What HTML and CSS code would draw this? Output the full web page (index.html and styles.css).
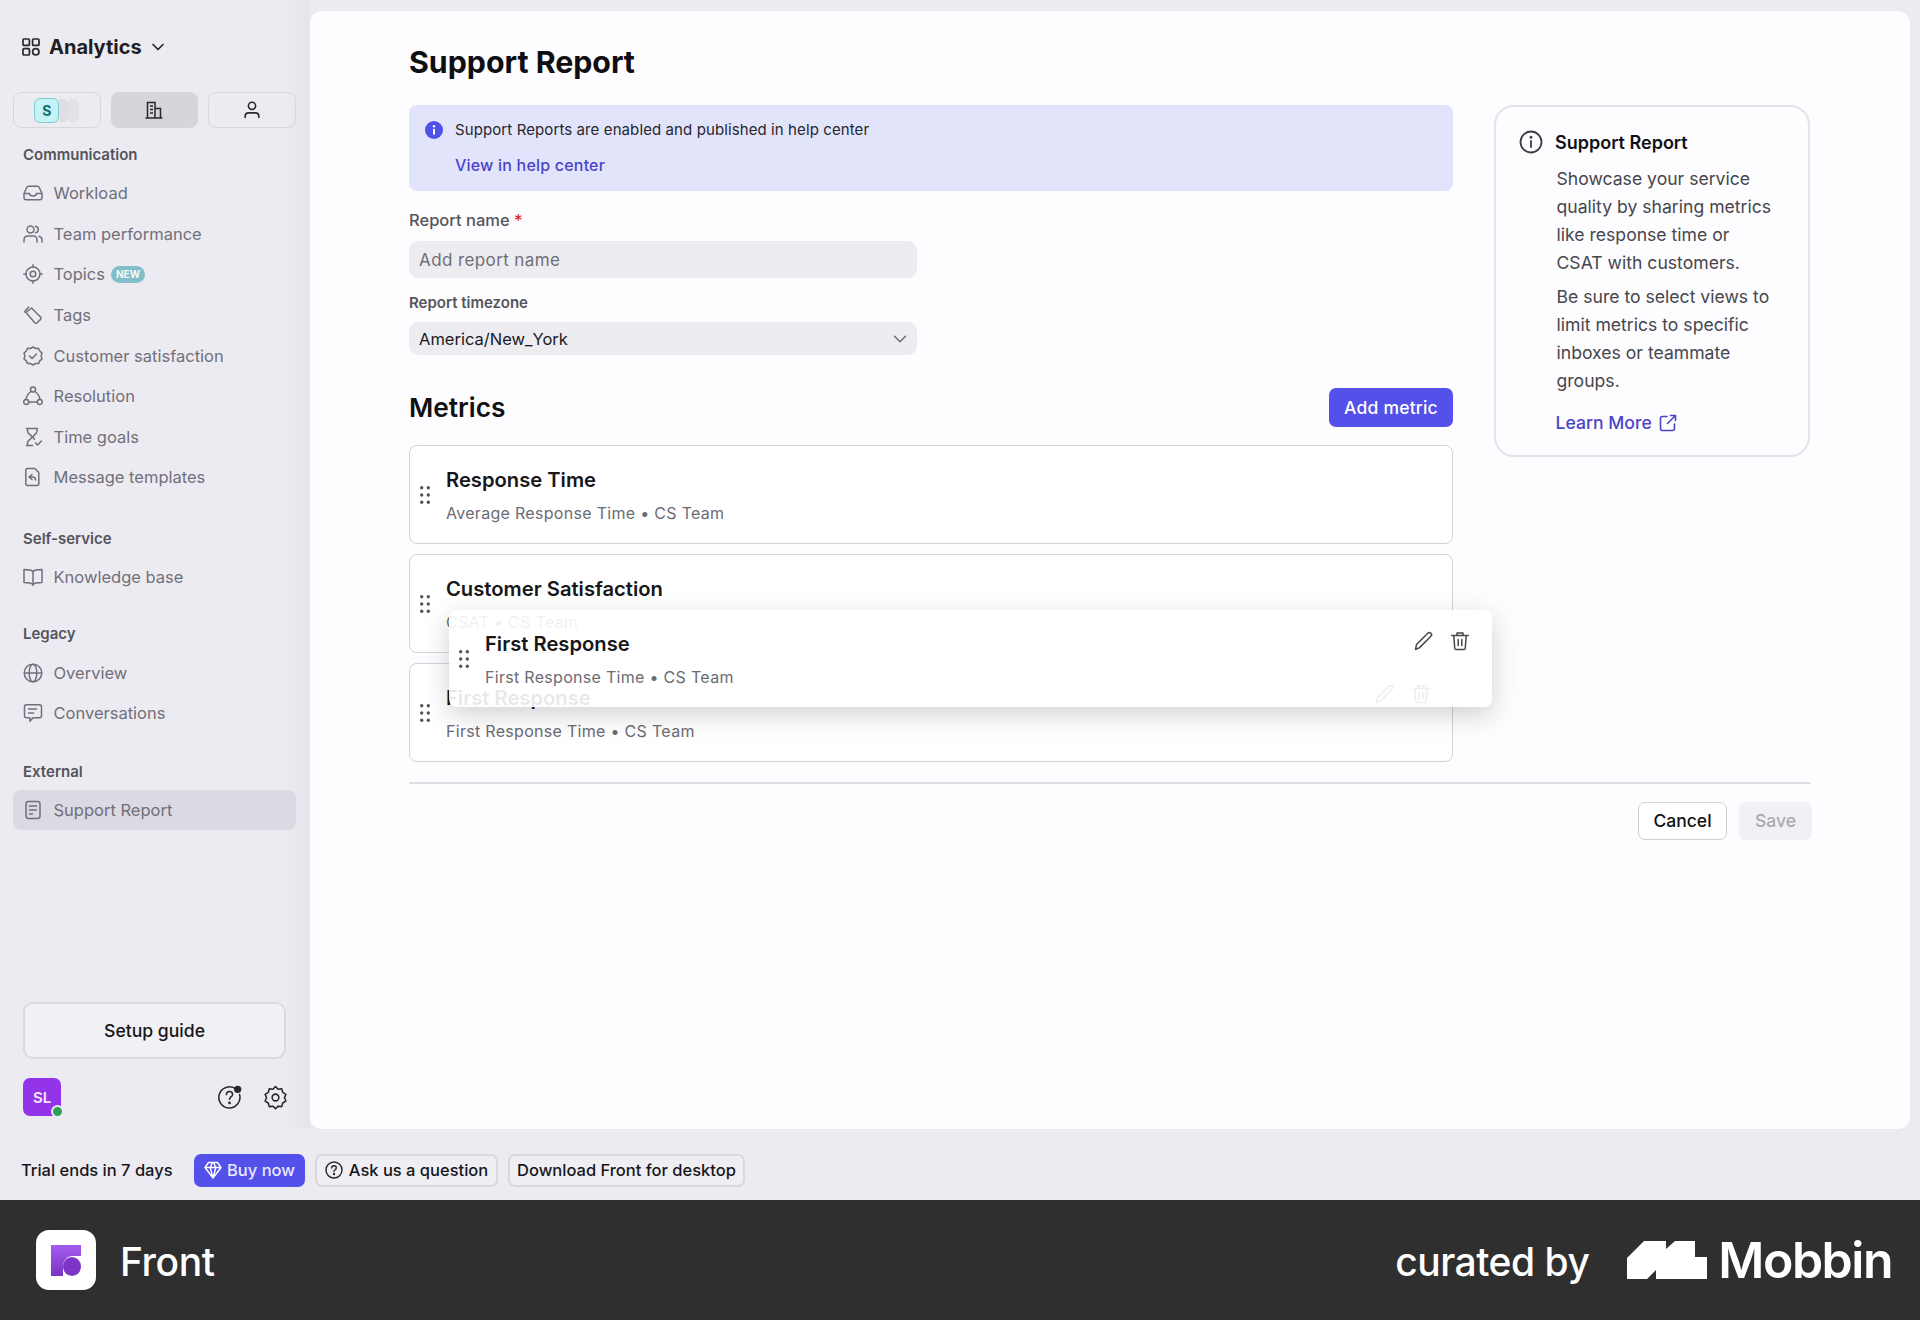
FILE: index.html
```html
<!DOCTYPE html>
<html lang="en">
<head>
<meta charset="utf-8">
<title>Support Report</title>
<link rel="stylesheet" href="styles.css">
</head>
<body>
<div class="page">
  <div class="workspace">
    <aside class="sidebar">
      <div class="app-title">
        <svg class="ico-18" viewBox="0 0 18 18" fill="none" stroke="#27272c" stroke-width="1.7"><rect x="1" y="1" width="6.4" height="6.4" rx="1"/><rect x="10.6" y="1" width="6.4" height="6.4" rx="1"/><rect x="1" y="10.6" width="6.4" height="6.4" rx="1"/><circle cx="13.8" cy="13.8" r="3.2"/></svg>
        <span class="app-name">Analytics</span>
        <svg class="ico-chev" viewBox="0 0 14 14" fill="none" stroke="#27272c" stroke-width="1.7" stroke-linecap="round" stroke-linejoin="round"><path d="M2 4.500l5 5 5-5"/></svg>
      </div>
      <div class="tabs">
        <div class="tab">
          <span class="badge-s">S</span><span class="stack stack-a"></span><span class="stack stack-b"></span>
        </div>
        <div class="tab tab-on">
          <svg class="ico-20" viewBox="0 0 20 20" fill="none" stroke="#27272c" stroke-width="1.5"><path d="M1.500 18h17M3.500 18V2.500H11V18M11 8.500h5.500V18M6 6h3M6 9.500h3M6 13h3"/></svg>
        </div>
        <div class="tab">
          <svg class="ico-20" viewBox="0 0 20 20" fill="none" stroke="#27272c" stroke-width="1.6" stroke-linecap="round"><circle cx="10" cy="5.800" r="3.600"/><path d="M3.200 17.500v-1.200c0-2 1.600-3.400 3.400-3.400h6.800c1.800 0 3.400 1.400 3.400 3.400v1.200"/></svg>
        </div>
      </div>

      <div class="group-label first">Communication</div>
      <nav class="group">
        <a class="item"><svg class="ico-20" viewBox="0 0 20 20" fill="none" stroke="#71707a" stroke-width="1.5" stroke-linejoin="round"><path d="M1 10.500l2.600-5.800C4 3.800 4.800 3.300 5.700 3.300h8.600c.9 0 1.700.5 2.100 1.400l2.600 5.800v4c0 1.300-1 2.300-2.300 2.300H3.300C2 16.800 1 15.800 1 14.500z"/><path d="M1 10.500h5.500c0 1.700 1.500 2.500 3.500 2.500s3.500-.8 3.500-2.500H19"/></svg><span>Workload</span></a>
        <a class="item"><svg class="ico-20" viewBox="0 0 20 20" fill="none" stroke="#71707a" stroke-width="1.5" stroke-linecap="round"><circle cx="7.500" cy="5.500" r="3.500"/><path d="M1 18v-2c0-2.300 1.700-4 4-4h5c2.300 0 4 1.700 4 4v2M12.500 2.300c1.700.3 2.800 1.600 2.800 3.200s-1.100 2.900-2.800 3.200M16 12.300c1.800.5 3 2 3 3.700v2"/></svg><span>Team performance</span></a>
        <a class="item"><svg class="ico-20" viewBox="0 0 20 20" fill="none" stroke="#71707a" stroke-width="1.5" stroke-linecap="round"><circle cx="10" cy="10" r="7"/><circle cx="10" cy="10" r="2.800"/><path d="M10 .8V3M10 17v2.200M.8 10H3M17 10h2.200"/></svg><span>Topics</span><span class="new">NEW</span></a>
        <a class="item"><svg class="ico-20" viewBox="0 0 20 20" fill="none" stroke="#71707a" stroke-width="1.5" stroke-linejoin="round"><path d="M3 7.500L8.500 3l9 9c.7.700.7 1.700 0 2.400l-3.300 3.300c-.7.700-1.700.7-2.400 0z"/><path d="M1.500 7.800c0-.7.100-1.300.6-1.800L6 1.800"/></svg><span>Tags</span></a>
        <a class="item"><svg class="ico-20" viewBox="0 0 20 20" fill="none" stroke="#71707a" stroke-width="1.5" stroke-linejoin="round" stroke-linecap="round"><path d="M10 1l2.500 1.500 3-.2 1.200 2.700 2.300 2-.9 3 .9 2.900-2.300 2-1.200 2.700-3-.2L10 19l-2.500-1.600-3 .2-1.200-2.700-2.300-2 .9-2.900-.9-3 2.300-2 1.200-2.700 3 .2z"/><path d="M6.500 10L9 12.500 13.500 8"/></svg><span>Customer satisfaction</span></a>
        <a class="item"><svg class="ico-20" viewBox="0 0 20 20" fill="none" stroke="#71707a" stroke-width="1.5"><circle cx="10" cy="3.500" r="2.500"/><circle cx="3.200" cy="16" r="2.500"/><circle cx="16.800" cy="16" r="2.500"/><path d="M8 5.500c-3 2-4.500 4.500-5 8M12 5.500c3 2 4.500 4.500 5 8M5.700 16h8.600"/></svg><span>Resolution</span></a>
        <a class="item"><svg class="ico-20" viewBox="0 0 20 20" fill="none" stroke="#71707a" stroke-width="1.5" stroke-linecap="round" stroke-linejoin="round"><path d="M3.500 1.500h11M3.500 18.500h6M4.500 1.500v3c0 2 4.500 4 4.500 5.500s-4.500 3.500-4.500 5.500v3M14 1.500v3c0 2-4 4-4 5.500 0 .7.600 1.400 1.300 2.100"/><path d="M12.500 16l2 2 4-4"/></svg><span>Time goals</span></a>
        <a class="item"><svg class="ico-20" viewBox="0 0 20 20" fill="none" stroke="#71707a" stroke-width="1.5" stroke-linecap="round" stroke-linejoin="round"><path d="M4.800 1.500h7l4 4v11c0 1.100-.9 2-2 2H4.800c-1.100 0-2-.9-2-2v-13c0-1.100.9-2 2-2z"/><path d="M9 7.500L6 10l3 2.500M6 10h4c1.500 0 2.500 1 2.500 3"/></svg><span>Message templates</span></a>
      </nav>

      <div class="group-label self">Self-service</div>
      <nav class="group">
        <a class="item"><svg class="ico-20" viewBox="0 0 20 20" fill="none" stroke="#71707a" stroke-width="1.5" stroke-linejoin="round"><path d="M10 4.500C8.500 2.800 6 2.500 1 2.500v13c5 0 7.500.4 9 2 1.500-1.600 4-2 9-2v-13c-5 0-7.500.3-9 2z"/><path d="M10 4.500V19"/></svg><span>Knowledge base</span></a>
      </nav>

      <div class="group-label legacy">Legacy</div>
      <nav class="group">
        <a class="item"><svg class="ico-20" viewBox="0 0 20 20" fill="none" stroke="#71707a" stroke-width="1.5"><circle cx="10" cy="10" r="8.800"/><ellipse cx="10" cy="10" rx="3.800" ry="8.800"/><path d="M1.200 10h17.600"/></svg><span>Overview</span></a>
        <a class="item"><svg class="ico-20" viewBox="0 0 20 20" fill="none" stroke="#71707a" stroke-width="1.5" stroke-linecap="round" stroke-linejoin="round"><path d="M3.500 1.800h13c1.100 0 2 .9 2 2v9c0 1.100-.9 2-2 2H10l-3 3.400v-3.400H3.500c-1.100 0-2-.9-2-2v-9c0-1.100.9-2 2-2z"/><path d="M5.500 6h8M5.500 10h5"/></svg><span>Conversations</span></a>
      </nav>

      <div class="group-label external">External</div>
      <nav class="group">
        <a class="item item-on"><svg class="ico-20" viewBox="0 0 20 20" fill="none" stroke="#71707a" stroke-width="1.5" stroke-linecap="round"><rect x="3" y="1.500" width="14" height="17" rx="2.500"/><path d="M6.500 6h7M6.500 10h7M6.500 14h3"/></svg><span>Support Report</span></a>
      </nav>

      <div class="side-bottom">
        <button class="setup">Setup guide</button>
        <div class="user-row">
          <div class="avatar">SL<span class="online"></span></div>
          <div class="user-tools">
            <svg class="ico-26" viewBox="0 0 26 26" fill="none" stroke="#27272c" stroke-width="1.6" stroke-linecap="round"><path d="M20 4.500A11 11 0 1 0 23.500 10"/><path d="M9.800 10c0-1.900 1.400-3.200 3.200-3.200s3.200 1.200 3.200 3c0 2.600-3.200 2.600-3.200 5"/><circle cx="13" cy="18.600" r=".6" fill="#27272c"/><circle cx="21.500" cy="4.500" r="3.800" fill="#27272c" stroke="none"/></svg>
            <svg class="ico-26" viewBox="0 0 26 26" fill="none" stroke="#27272c" stroke-width="1.6" stroke-linejoin="round"><path d="M13 1.500l2.700 2.900 3.800-.5 1 3.800 3.300 2-1.500 3.500 1.500 3.500-3.300 2-1 3.800-3.800-.5-2.700 2.700-2.700-2.700-3.800.5-1-3.800-3.300-2 1.500-3.500-1.500-3.500 3.300-2 1-3.800 3.800.5z"/><circle cx="13" cy="13" r="3.500"/></svg>
          </div>
        </div>
      </div>
    </aside>

    <main class="panel">
      <h1 class="title">Support Report</h1>
      <div class="columns">
        <section class="form">
          <div class="banner">
            <svg class="ico-18" viewBox="0 0 18 18"><circle cx="9" cy="9" r="9" fill="#5150e8"/><circle cx="9" cy="5.300" r="1.200" fill="#fff"/><rect x="8" y="7.800" width="2" height="5.800" rx=".5" fill="#fff"/></svg>
            <div class="banner-text">
              <p class="banner-line">Support Reports are enabled and published in help center</p>
              <a class="banner-link">View in help center</a>
            </div>
          </div>

          <label class="label label-name">Report name <span class="req">*</span></label>
          <div class="field field-text">Add report name</div>
          <label class="label label-tz">Report timezone</label>
          <div class="field field-select">
            <span>America/New_York</span>
            <svg class="ico-14" viewBox="0 0 14 14" fill="none" stroke="#6c6c74" stroke-width="1.5" stroke-linecap="round" stroke-linejoin="round"><path d="M1.500 4.300L7 9.700l5.500-5.400"/></svg>
          </div>

          <div class="metrics-head">
            <h2 class="h2">Metrics</h2>
            <button class="btn-primary">Add metric</button>
          </div>

          <div class="metric-list">
            <article class="metric">
              <svg class="grip" viewBox="0 0 10 18" fill="#55555c"><circle cx="1.700" cy="1.800" r="1.700"/><circle cx="8.300" cy="1.800" r="1.700"/><circle cx="1.700" cy="9" r="1.700"/><circle cx="8.300" cy="9" r="1.700"/><circle cx="1.700" cy="16.200" r="1.700"/><circle cx="8.300" cy="16.200" r="1.700"/></svg>
              <div class="metric-body"><h3 class="metric-title">Response Time</h3><p class="metric-sub">Average Response Time • CS Team</p></div>
            </article>
            <article class="metric">
              <svg class="grip" viewBox="0 0 10 18" fill="#55555c"><circle cx="1.700" cy="1.800" r="1.700"/><circle cx="8.300" cy="1.800" r="1.700"/><circle cx="1.700" cy="9" r="1.700"/><circle cx="8.300" cy="9" r="1.700"/><circle cx="1.700" cy="16.200" r="1.700"/><circle cx="8.300" cy="16.200" r="1.700"/></svg>
              <div class="metric-body"><h3 class="metric-title">Customer Satisfaction</h3><p class="metric-sub">CSAT • CS Team</p></div>
            </article>
            <article class="metric">
              <svg class="grip" viewBox="0 0 10 18" fill="#55555c"><circle cx="1.700" cy="1.800" r="1.700"/><circle cx="8.300" cy="1.800" r="1.700"/><circle cx="1.700" cy="9" r="1.700"/><circle cx="8.300" cy="9" r="1.700"/><circle cx="1.700" cy="16.200" r="1.700"/><circle cx="8.300" cy="16.200" r="1.700"/></svg>
              <div class="metric-body"><h3 class="metric-title">First Response</h3><p class="metric-sub">First Response Time • CS Team</p></div>
              <div class="metric-actions">
                <svg class="ico-20" viewBox="0 0 20 20" fill="none" stroke="#46464c" stroke-width="1.5" stroke-linejoin="round"><path d="M1.500 18.500l1-5L13.800 2.200c.9-.9 2.200-.9 3.100 0s.9 2.200 0 3.100L5.600 16.600z"/></svg>
                <svg class="ico-20" viewBox="0 0 20 20" fill="none" stroke="#46464c" stroke-width="1.5" stroke-linecap="round" stroke-linejoin="round"><path d="M1.800 4.500h16.400M7 4.500V2h6v2.500M3.800 4.500l.9 12.500c.1.900.8 1.500 1.600 1.500h7.400c.8 0 1.500-.6 1.600-1.500l.9-12.500M8.200 8.500v6M11.800 8.500v6"/></svg>
              </div>
            </article>
            <article class="metric metric-drag">
              <svg class="grip" viewBox="0 0 10 18" fill="#55555c"><circle cx="1.700" cy="1.800" r="1.700"/><circle cx="8.300" cy="1.800" r="1.700"/><circle cx="1.700" cy="9" r="1.700"/><circle cx="8.300" cy="9" r="1.700"/><circle cx="1.700" cy="16.200" r="1.700"/><circle cx="8.300" cy="16.200" r="1.700"/></svg>
              <div class="metric-body"><h3 class="metric-title">First Response</h3><p class="metric-sub">First Response Time • CS Team</p></div>
              <div class="metric-actions">
                <svg class="ico-20" viewBox="0 0 20 20" fill="none" stroke="#46464c" stroke-width="1.5" stroke-linejoin="round"><path d="M1.500 18.500l1-5L13.800 2.200c.9-.9 2.200-.9 3.100 0s.9 2.200 0 3.100L5.600 16.600z"/></svg>
                <svg class="ico-20" viewBox="0 0 20 20" fill="none" stroke="#46464c" stroke-width="1.5" stroke-linecap="round" stroke-linejoin="round"><path d="M1.800 4.500h16.400M7 4.500V2h6v2.500M3.800 4.500l.9 12.500c.1.900.8 1.500 1.600 1.500h7.400c.8 0 1.500-.6 1.600-1.500l.9-12.500M8.200 8.500v6M11.800 8.500v6"/></svg>
              </div>
            </article>
          </div>
        </section>

        <aside class="info">
          <div class="info-head">
            <svg class="ico-24" viewBox="0 0 24 24" fill="none" stroke="#3c3c42" stroke-width="1.8" stroke-linecap="round"><circle cx="12" cy="12" r="10.500"/><path d="M12 11v6"/><circle cx="12" cy="7.200" r=".6" fill="#3c3c42"/></svg>
            <strong class="info-title">Support Report</strong>
          </div>
          <p class="info-text">Showcase your service quality by sharing metrics like response time or CSAT with customers.</p>
          <p class="info-text info-text-2">Be sure to select views to limit metrics to specific inboxes or teammate groups.</p>
          <a class="learn">Learn More
            <svg class="ico-18" viewBox="0 0 18 18" fill="none" stroke="#4d45c9" stroke-width="1.6" stroke-linecap="round" stroke-linejoin="round"><path d="M8 2.500H3.500c-1.100 0-2 .9-2 2v10c0 1.100.9 2 2 2h10c1.100 0 2-.9 2-2V10M11.500 1.500h5v5M16.500 1.500l-8 8"/></svg>
          </a>
        </aside>
      </div>
      <hr class="rule">
      <div class="actions">
        <button class="btn-cancel">Cancel</button>
        <button class="btn-save">Save</button>
      </div>
    </main>
  </div>

  <div class="trial">
    <span class="trial-text">Trial ends in 7 days</span>
    <button class="pill pill-buy">
      <svg class="ico-18" viewBox="0 0 18 18" fill="none" stroke="#fff" stroke-width="1.4" stroke-linejoin="round"><path d="M4.500 1.500h9l3.500 5L9 17 1 6.500zM1 6.500h16M6.200 6.500L9 17l2.800-10.500-2.300-5h-1z"/></svg>
      Buy now
    </button>
    <button class="pill pill-ask">
      <svg class="ico-18" viewBox="0 0 18 18" fill="none" stroke="#27272c" stroke-width="1.4" stroke-linecap="round"><circle cx="9" cy="9" r="8"/><path d="M6.700 7c0-1.300 1-2.200 2.300-2.200s2.300.9 2.300 2.100c0 1.800-2.300 1.800-2.300 3.500"/><circle cx="9" cy="13" r=".5" fill="#27272c"/></svg>
      Ask us a question
    </button>
    <button class="pill pill-dl">Download Front for desktop</button>
  </div>

  <footer class="brandbar">
    <div class="brand-left">
      <div class="front-logo">
        <svg class="front-mark" viewBox="0 0 30 31"><defs><linearGradient id="fg" x1="0" y1="0" x2="0" y2="1"><stop offset="0" stop-color="#a45cf0"/><stop offset="1" stop-color="#7a34c4"/></linearGradient></defs><path d="M0 0h30v11h-9a9.500 10 0 0 0-9 9.500V31H0z" fill="url(#fg)"/><ellipse cx="21" cy="21.500" rx="9" ry="9.500" fill="#7d36c8"/></svg>
      </div>
      <span class="front-name">Front</span>
    </div>
    <div class="brand-right">
      <span class="curated">curated by</span>
      <svg class="mobbin-mark" viewBox="0 0 80 38"><path d="M0 38V17L17 0h22v8l9-8h20v16h12v22H50l8-9v9H29v-9l-9 9z" fill="#fff"/></svg>
      <span class="mobbin">Mobbin</span>
    </div>
  </footer>
</div>
</body>
</html>
```
FILE: styles.css
```css
* { box-sizing: border-box; }
html, body { margin: 0; padding: 0; }
body { font-family: Inter, "Liberation Sans", sans-serif; background: #ecebf1; color: #111114; }
h1, h2, h3, p { margin: 0; }
button { font-family: inherit; cursor: pointer; }
svg { display: block; flex: none; }

.page { width: 1920px; height: 1320px; display: flex; flex-direction: column; overflow: hidden; }
.workspace { display: flex; height: 1129px; }

.ico-14 { width: 14px; height: 14px; }
.ico-18 { width: 18px; height: 18px; }
.ico-20 { width: 20px; height: 20px; }
.ico-24 { width: 24px; height: 24px; }
.ico-26 { width: 25px; height: 25px; }
.ico-chev { width: 14px; height: 14px; margin-left: 9px; }

/* sidebar */
.sidebar { width: 310px; flex: none; display: flex; flex-direction: column; padding: 0 14px 0 13px; background: linear-gradient(90deg, #ecebf1 92%, #e6e5ec 100%); }
.app-title { display: flex; align-items: center; height: 30px; margin-top: 32px; padding-left: 9px; }
.app-name { font-size: 20px; font-weight: 700; color: #1e1e23; margin-left: 9px; line-height: 30px; }
.tabs { display: grid; grid-template-columns: repeat(3, 1fr); gap: 10px; margin-top: 30px; }
.tab { height: 36px; border: 1.5px solid #d7d6dc; border-radius: 8px; display: flex; align-items: center; justify-content: center; }
.tab-on { background: #d6d5da; border-color: #d6d5da; }
.badge-s { width: 25px; height: 25px; border-radius: 6px; background: #c6f2f5; border: 1.5px solid #79cdd3; color: #0c6f78; font-size: 14px; font-weight: 700; display: flex; align-items: center; justify-content: center; }
.stack { display: block; height: 23px; border-radius: 0 6px 6px 0; }
.stack-a { width: 10px; background: #e1dde3; }
.stack-b { width: 10px; background: #e3e2e8; }

.group-label { font-size: 15px; line-height: 20px; font-weight: 600; color: #54545c; padding-left: 10px; }
.group-label.first { margin-top: 17px; }
.group-label.self { margin-top: 31px; }
.group-label.legacy { margin-top: 27px; }
.group-label.external { margin-top: 28.3px; }
.group { display: flex; flex-direction: column; margin-top: 8px; }
.item { height: 40.6px; display: flex; align-items: center; padding-left: 10px; border-radius: 8px; color: #71707a; font-size: 16.5px; }
.item svg { margin-right: 10.5px; }
.item-on { background: #dbdae2; }
.new { margin-left: 6px; width: 34px; height: 17px; border-radius: 9px; background: #82bdca; color: #f4fbfc; font-size: 10px; font-weight: 700; display: flex; align-items: center; justify-content: center; }

.side-bottom { margin-top: auto; padding: 0 10px 13px; }
.setup { width: 263px; height: 57px; border: 2px solid #dad9df; border-radius: 10px; background: #f1f0f5; font-size: 17.6px; font-weight: 500; color: #16161a; display: block; }
.user-row { display: flex; align-items: center; justify-content: space-between; margin-top: 19px; height: 38px; }
.avatar { width: 38px; height: 38px; border-radius: 7px; background: #9333ea; color: #f5e9ff; font-size: 15px; font-weight: 600; display: flex; align-items: center; justify-content: center; position: relative; }
.online { position: absolute; right: -3px; bottom: -2px; width: 13px; height: 13px; border-radius: 50%; background: #2e9f57; border: 2px solid #ecebf1; }
.user-tools { display: flex; gap: 21px; margin-right: -2px; }

/* main panel */
.panel { width: 1600px; flex: none; margin-top: 11px; background: #fdfcfe; border-radius: 12px; padding: 30px 100px 0 99px; }
.title { font-size: 30.3px; line-height: 42px; font-weight: 700; color: #0f0f12; }
.columns { display: flex; gap: 41px; margin-top: 22px; align-items: flex-start; }
.form { width: 1044px; flex: none; }

.banner { height: 86px; background: #e2e4fc; border-radius: 8px; padding: 14px 16px; display: flex; gap: 12px; }
.banner > svg { margin-top: 2px; }
.banner-line { font-size: 15px; line-height: 22px; color: #26262c; letter-spacing: .1px; }
.banner-link { display: block; margin-top: 13px; font-size: 16px; line-height: 22px; color: #4a43c8; font-weight: 500; letter-spacing: .2px; }

.label { display: block; font-weight: 500; color: #55555c; line-height: 20px; }
.label-name { font-size: 16.5px; margin-top: 20px; line-height: 19px; }
.label-tz { font-size: 15px; margin-top: 15px; font-weight: 600; }
.req { color: #d92d20; }
.field { width: 508px; background: #edecf0; border-radius: 9px; display: flex; align-items: center; padding: 0 10px; font-size: 17px; justify-content: space-between; }
.field-text { height: 37px; margin-top: 11px; color: #6f6f77; letter-spacing: .4px; }
.field-select { height: 33px; margin-top: 9px; color: #1a1a1f; font-size: 16.5px; }

.metrics-head { display: flex; align-items: center; justify-content: space-between; margin-top: 33px; }
.h2 { font-size: 26.3px; font-weight: 600; color: #111114; }
.btn-primary { width: 124px; height: 39px; background: #5450ea; color: #fff; border: 0; border-radius: 7px; font-size: 17.5px; font-weight: 500; letter-spacing: .2px; }

.metric-list { display: flex; flex-direction: column; gap: 10px; margin-top: 18px; position: relative; }
.metric { height: 99px; border: 1.5px solid #d2d2d7; border-radius: 8px; background: #fff; display: flex; align-items: center; padding-left: 10px; position: relative; }
.grip { width: 10px; height: 18px; }
.metric-body { margin-left: 16px; padding-top: 2px; }
.metric-title { font-size: 20.2px; line-height: 28px; font-weight: 600; color: #17171b; }
.metric-sub { margin-top: 7px; font-size: 16px; line-height: 24px; color: #6b6b73; letter-spacing: .3px; }
.metric-actions { position: absolute; right: 21px; top: 20px; display: flex; gap: 16px; }
.metric-drag { position: absolute; left: 40px; top: 165px; width: 1043px; height: 97px; border: 0; background: rgba(255, 255, 255, .9); box-shadow: 0 8px 26px rgba(30, 30, 40, .2); }
.metric-drag .metric-actions { top: 21px; right: 22px; }

/* info card */
.info { width: 316px; flex: none; height: 352px; border: 2px solid #e3e3e8; border-radius: 20px; padding: 23px 20px 0 23px; }
.info-head { display: flex; align-items: center; gap: 12px; height: 24px; }
.info-title { font-size: 18px; font-weight: 600; color: #111114; }
.info-text { margin: 11px 0 0 37.5px; font-size: 17.6px; line-height: 28px; color: #46464d; width: 222px; }
.info-text-2 { margin-top: 6px; }
.learn { display: flex; align-items: center; gap: 7px; margin: 14px 0 0 36.5px; font-size: 17.6px; line-height: 28px; color: #4d45c9; font-weight: 500; }

.rule { border: 0; height: 2px; background: #dedee3; margin: 20px 0 0; width: 1402px; }
.actions { display: flex; justify-content: flex-end; gap: 12px; margin-top: 17.5px; width: 1403px; }
.btn-cancel { width: 89px; height: 38px; background: #fff; border: 1.5px solid #cfcfd5; border-radius: 7px; font-size: 17.5px; font-weight: 500; color: #111114; }
.btn-save { width: 73px; height: 38px; background: #f1f0f4; border: 0; border-radius: 7px; font-size: 17.5px; font-weight: 500; color: #aaaab2; }

/* trial */
.trial { height: 71px; display: flex; align-items: center; padding: 11px 0 0 21px; }
.trial-text { font-size: 16.5px; font-weight: 500; color: #17171b; margin-right: 21px; width: 152px; white-space: nowrap; }
.pill { height: 33px; border-radius: 7px; font-size: 16.5px; font-weight: 500; display: flex; align-items: center; gap: 5px; padding: 0; white-space: nowrap; justify-content: center; }
.pill-buy { width: 111px; background: #5450ea; border: 0; color: #e9e9ff; margin-right: 10px; }
.pill-ask { width: 183px; background: #efeef3; border: 2px solid #d9d8de; color: #17171b; margin-right: 10px; gap: 6px; }
.pill-dl { width: 237px; background: #efeef3; border: 2px solid #d9d8de; color: #17171b; }

/* brand bar */
.brandbar { height: 120px; background: #2f2f2f; display: flex; align-items: center; justify-content: space-between; padding: 0 28px 0 36px; }
.brand-left, .brand-right { display: flex; align-items: center; }
.front-logo { width: 60px; height: 60px; border-radius: 13px; background: #fff; display: flex; align-items: center; justify-content: center; }
.front-mark { width: 30px; height: 31px; }
.front-name { margin: 3px 0 0 24px; font-size: 39px; font-weight: 500; color: #fff; letter-spacing: -.4px; }
.curated { margin-top: 3px; font-size: 39px; font-weight: 500; color: #fff; letter-spacing: -.5px; }
.mobbin-mark { width: 80px; height: 38px; margin-left: 38px; }
.mobbin { margin-left: 11px; font-size: 50px; font-weight: 600; color: #fff; letter-spacing: -1.5px; line-height: 38px; }
```
